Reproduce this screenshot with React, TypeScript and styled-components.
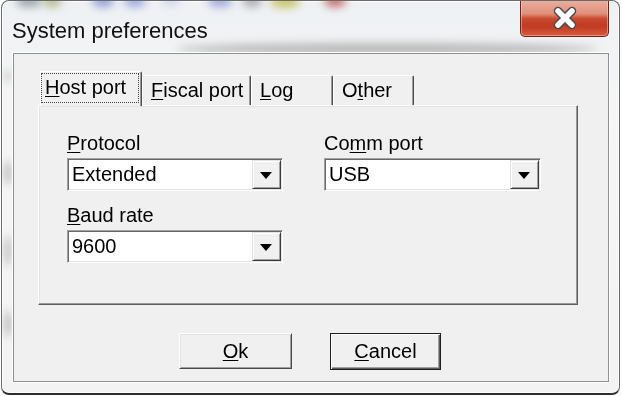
import * as React from 'react';
import styled, { createGlobalStyle } from 'styled-components';

const GlobalStyle = createGlobalStyle`
  html, body {
    margin: 0;
    padding: 0;
    background: #ffffff;
  }
  body {
    width: 622px;
    height: 396px;
    overflow: hidden;
    font-family: "Liberation Sans", Arial, sans-serif;
    color: #000;
  }
`;

const Window = styled.div`
  position: relative;
  box-sizing: border-box;
  width: 619px;
  height: 395px;
  margin-left: 1px;
  border: 1px solid #6a6a6a;
  border-bottom: 2px solid #2e2e2e;
  border-radius: 8px;
  background: linear-gradient(180deg, #eef1f4 0%, #f5f5f5 30%, #f3f3f3 100%);
  box-shadow: inset 0 0 0 1px rgba(255, 255, 255, 0.9);
  display: flex;
  flex-direction: column;
  overflow: hidden;
  filter: blur(0.3px);
`;

const Blob = styled.div`
  position: absolute;
  border-radius: 50%;
  filter: blur(4px);
  pointer-events: none;
`;

const TitleBar = styled.div`
  position: relative;
  height: 52px;
  display: flex;
  justify-content: space-between;
  align-items: flex-start;
`;

const Title = styled.div`
  padding: 17px 0 0 10px;
  font-size: 22px;
  line-height: 25px;
  color: #111;
`;

const CloseButton = styled.div`
  box-sizing: border-box;
  width: 89px;
  height: 37px;
  margin: -1px 10px 0 0;
  border: 1px solid #6e2216;
  border-top: none;
  border-radius: 0 0 5px 5px;
  background: linear-gradient(
    180deg,
    #eab0a0 0%,
    #e0907b 38%,
    #c94a30 52%,
    #c03b22 72%,
    #d65a3d 100%
  );
  box-shadow: inset 0 0 0 1px rgba(255, 220, 210, 0.45);
  display: flex;
  align-items: center;
  justify-content: center;
`;

const Client = styled.div`
  position: relative;
  box-sizing: border-box;
  height: 329px;
  margin: 0 10px 0 11px;
  padding: 17px 30px 0 24px;
  border: 1px solid #8e8f8f;
  box-shadow: 0 0 0 1px #ffffff;
  background: #f0f0f0;
  display: flex;
  flex-direction: column;
`;

const TabRow = styled.div`
  display: flex;
  align-items: flex-end;
  height: 34px;
  padding-left: 2px;
`;

const Tab = styled.div<{ $w: number; $active?: boolean }>`
  position: relative;
  box-sizing: border-box;
  width: ${(p) => p.$w}px;
  height: ${(p) => (p.$active ? 35 : 30)}px;
  margin-bottom: ${(p) => (p.$active ? -1 : 0)}px;
  z-index: ${(p) => (p.$active ? 2 : 1)};
  padding: ${(p) => (p.$active ? '1px 2px 0 0' : '3px 0 0 8px')};
  border-top: 1px solid #ffffff;
  border-left: 1px solid #ffffff;
  border-right: 1px solid #4e4e4e;
  border-radius: 2px 2px 0 0;
  box-shadow: inset -1px 0 #9a9a9a;
  background: #f0f0f0;
  font-size: 20px;
  line-height: 23px;
`;

const Focus = styled.div`
  box-sizing: border-box;
  height: 30px;
  padding: 2px 0 0 3px;
  border: 1px dotted #444;
`;

const Panel = styled.div`
  box-sizing: border-box;
  height: 200px;
  padding: 26px 0 0 28px;
  border: 1px solid;
  border-color: #ffffff #5e5e5e #5e5e5e #ffffff;
  box-shadow: inset -1px -1px #9a9a9a, inset 1px 1px #e3e3e3;
`;

const FieldGrid = styled.div`
  display: grid;
  grid-template-columns: 216px 217px;
  column-gap: 41px;
  row-gap: 13px;
`;

const Field = styled.div`
  display: flex;
  flex-direction: column;
`;

const Label = styled.div`
  font-size: 20px;
  line-height: 23px;
  margin-bottom: 3px;
`;

const Combo = styled.div`
  box-sizing: border-box;
  height: 33px;
  display: flex;
  align-items: stretch;
  border: 1px solid;
  border-color: #a0a0a0 #ffffff #ffffff #a0a0a0;
  box-shadow: inset 1px 1px #696969, inset -1px -1px #e3e3e3;
  padding: 1px;
  background: #ffffff;
`;

const ComboValue = styled.div`
  flex: 1;
  padding: 3px 0 0 3px;
  font-size: 20px;
  line-height: 23px;
`;

const DropButton = styled.div`
  box-sizing: border-box;
  width: 29px;
  border: 1px solid;
  border-color: #e3e3e3 #3c3c3c #3c3c3c #e3e3e3;
  box-shadow: inset 1px 1px #ffffff, inset -1px -1px #a0a0a0;
  background: #f0f0f0;
  display: flex;
  align-items: center;
  justify-content: center;
`;

const Arrow = styled.span`
  width: 0;
  height: 0;
  margin: 2px 2px 0 0;
  border-left: 6px solid transparent;
  border-right: 6px solid transparent;
  border-top: 7px solid #000;
`;

const ButtonRow = styled.div`
  display: flex;
  justify-content: center;
  align-items: flex-start;
  gap: 38px;
  padding: 28px 0 0 4px;
`;

const Button = styled.div<{ $w: number; $default?: boolean }>`
  box-sizing: border-box;
  width: ${(p) => p.$w}px;
  height: ${(p) => (p.$default ? 37 : 36)}px;
  border: 1px solid;
  border-color: ${(p) => (p.$default ? '#1e1e1e' : '#ffffff #4a4a4a #4a4a4a #ffffff')};
  box-shadow: ${(p) =>
    p.$default
      ? 'inset 1px 1px #ffffff, inset -1px -1px #5a5a5a, inset -2px -2px #a0a0a0'
      : 'inset 1px 1px #e3e3e3, inset -1px -1px #a0a0a0'};
  background: #f0f0f0;
  display: flex;
  align-items: center;
  justify-content: center;
  font-size: 20px;
  line-height: 23px;
`;

const U = styled.span`
  text-decoration: underline;
  text-underline-offset: 2px;
  text-decoration-thickness: 1px;
`;

const blobs = [
  { x: 14, y: -6, w: 26, h: 12, c: '#9aa3ad' },
  { x: 40, y: -6, w: 20, h: 12, c: '#b6b98f' },
  { x: 90, y: -6, w: 22, h: 12, c: '#8d9bd6' },
  { x: 122, y: -6, w: 22, h: 12, c: '#9aa6e0' },
  { x: 160, y: -6, w: 18, h: 10, c: '#c8d2ea' },
  { x: 206, y: -6, w: 24, h: 12, c: '#9ea6dc' },
  { x: 240, y: -6, w: 20, h: 12, c: '#a9aab0' },
  { x: 268, y: -6, w: 30, h: 13, c: '#c8c46a' },
  { x: 322, y: -6, w: 22, h: 12, c: '#c46a6a' },
  { x: 175, y: 42, w: 420, h: 12, c: '#b9b9b9' },
  { x: 2, y: 70, w: 8, h: 10, c: '#c9c9c9' },
  { x: 2, y: 160, w: 8, h: 24, c: '#bdbdbd' },
  { x: 2, y: 235, w: 8, h: 30, c: '#c2c2c2' },
  { x: 2, y: 310, w: 8, h: 26, c: '#bdbdbd' },
];

export default function App() {
  return (
    <>
      <GlobalStyle />
      <Window>
        {blobs.map((b, i) => (
          <Blob
            key={i}
            style={{ left: b.x, top: b.y, width: b.w, height: b.h, background: b.c }}
          />
        ))}
        <TitleBar>
          <Title>System preferences</Title>
          <CloseButton>
            <svg width="28" height="24" viewBox="0 0 28 24">
              <path
                d="M7 5 L21 19 M21 5 L7 19"
                stroke="#4b4b4b"
                strokeWidth="8.5"
                strokeLinecap="round"
                fill="none"
              />
              <path
                d="M7 5 L21 19 M21 5 L7 19"
                stroke="#ffffff"
                strokeWidth="5.5"
                strokeLinecap="round"
                fill="none"
              />
            </svg>
          </CloseButton>
        </TitleBar>
        <Client>
          <TabRow>
            <Tab $w={102} $active>
              <Focus>
                <U>H</U>ost port
              </Focus>
            </Tab>
            <Tab $w={109}>
              <U>F</U>iscal port
            </Tab>
            <Tab $w={82}>
              <U>L</U>og
            </Tab>
            <Tab $w={81}>
              O<U>t</U>her
            </Tab>
          </TabRow>
          <Panel>
            <FieldGrid>
              <Field>
                <Label>
                  <U>P</U>rotocol
                </Label>
                <Combo>
                  <ComboValue>Extended</ComboValue>
                  <DropButton>
                    <Arrow />
                  </DropButton>
                </Combo>
              </Field>
              <Field>
                <Label>
                  Co<U>m</U>m port
                </Label>
                <Combo>
                  <ComboValue>USB</ComboValue>
                  <DropButton>
                    <Arrow />
                  </DropButton>
                </Combo>
              </Field>
              <Field>
                <Label>
                  <U>B</U>aud rate
                </Label>
                <Combo>
                  <ComboValue>9600</ComboValue>
                  <DropButton>
                    <Arrow />
                  </DropButton>
                </Combo>
              </Field>
            </FieldGrid>
          </Panel>
          <ButtonRow>
            <Button $w={113}>
              <U>O</U>k
            </Button>
            <Button $w={111} $default>
              <U>C</U>ancel
            </Button>
          </ButtonRow>
        </Client>
      </Window>
    </>
  );
}
